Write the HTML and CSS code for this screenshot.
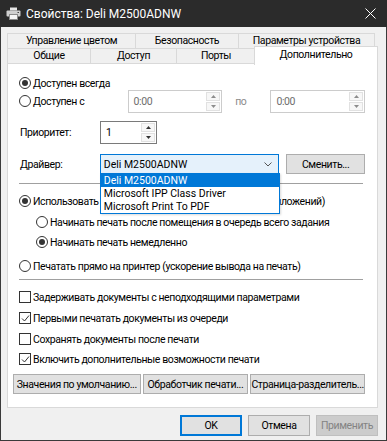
FILE: index.html
```html
<!DOCTYPE html>
<html lang="ru">
<head>
  <meta charset="UTF-8">
  <title>Свойства: Deli M2500ADNW</title>
  <link rel="stylesheet" href="styles.css">
</head>
<body>

<div class="window">
  <div class="titlebar">
    <svg class="title-icon" width="15" height="13" viewBox="0 0 15 13">
      <rect x="4" y="0.5" width="7" height="3" fill="#e6e6e6"/>
      <rect x="0.5" y="3.5" width="14" height="6" rx="1" fill="#cfcfcf"/>
      <rect x="3.5" y="7.5" width="8" height="5" fill="#f4f4f4" stroke="#8a8a8a"/>
      <rect x="11.5" y="5" width="1.5" height="1" fill="#444"/>
    </svg>
    <span class="title">Свойства: Deli M2500ADNW</span>
    <svg class="close" width="11" height="11" viewBox="0 0 11 11">
      <path d="M0.5 0.5 L10.5 10.5 M10.5 0.5 L0.5 10.5" stroke="#fff" stroke-width="1"/>
    </svg>
  </div>

  <div class="client">
    <!-- tabs, two rows -->
    <div class="tabs">
      <div class="tab-row">
        <div class="tab tab-color">Управление цветом</div>
        <div class="tab tab-security">Безопасность</div>
        <div class="tab tab-device">Параметры устройства</div>
      </div>
      <div class="tab-row">
        <div class="tab tab-general">Общие</div>
        <div class="tab tab-access">Доступ</div>
        <div class="tab tab-ports">Порты</div>
        <div class="tab tab-advanced active">Дополнительно</div>
      </div>
    </div>

    <div class="panel">
      <div class="row row-always">
        <span class="radio checked"></span>
        <span>Доступен всегда</span>
      </div>

      <div class="row row-from">
        <span class="radio"></span>
        <span class="from-label">Доступен с</span>
        <div class="spin spin-time disabled">
          <span class="spin-value">0:00</span>
          <span class="spin-btns">
            <span class="spin-btn"><svg width="5" height="3" viewBox="0 0 5 3"><path d="M0 3 L2.5 0 L5 3Z" fill="#8c8c8c"/></svg></span>
            <span class="spin-btn"><svg width="5" height="3" viewBox="0 0 5 3"><path d="M0 0 L2.5 3 L5 0Z" fill="#8c8c8c"/></svg></span>
          </span>
        </div>
        <span class="to-label">по</span>
        <div class="spin spin-time disabled">
          <span class="spin-value">0:00</span>
          <span class="spin-btns">
            <span class="spin-btn"><svg width="5" height="3" viewBox="0 0 5 3"><path d="M0 3 L2.5 0 L5 3Z" fill="#8c8c8c"/></svg></span>
            <span class="spin-btn"><svg width="5" height="3" viewBox="0 0 5 3"><path d="M0 0 L2.5 3 L5 0Z" fill="#8c8c8c"/></svg></span>
          </span>
        </div>
      </div>

      <div class="row row-priority">
        <span class="field-label">Приоритет:</span>
        <div class="spin spin-priority">
          <span class="spin-value">1</span>
          <span class="spin-btns">
            <span class="spin-btn"><svg width="5" height="3" viewBox="0 0 5 3"><path d="M0 3 L2.5 0 L5 3Z" fill="#333"/></svg></span>
            <span class="spin-btn"><svg width="5" height="3" viewBox="0 0 5 3"><path d="M0 0 L2.5 3 L5 0Z" fill="#333"/></svg></span>
          </span>
        </div>
      </div>

      <div class="row row-driver">
        <span class="field-label">Драйвер:</span>
        <div class="combo-wrap">
          <div class="combo">
            <span>Deli M2500ADNW</span>
            <svg width="8" height="5" viewBox="0 0 8 5"><path d="M0.5 0.5 L4 4 L7.5 0.5" fill="none" stroke="#555" stroke-width="1"/></svg>
          </div>
          <ul class="combo-list">
            <li class="selected">Deli M2500ADNW</li>
            <li>Microsoft IPP Class Driver</li>
            <li>Microsoft Print To PDF</li>
          </ul>
        </div>
        <button class="btn btn-change">Сменить...</button>
      </div>

      <div class="separator sep-top"></div>

      <div class="row row-spool">
        <span class="radio checked"></span>
        <span>Использовать очередь печати (ускорение работы приложений)</span>
      </div>
      <div class="row row-sub row-sub-first">
        <span class="radio"></span>
        <span>Начинать печать после помещения в очередь всего задания</span>
      </div>
      <div class="row row-sub row-sub-second">
        <span class="radio checked"></span>
        <span>Начинать печать немедленно</span>
      </div>
      <div class="row row-direct">
        <span class="radio"></span>
        <span>Печатать прямо на принтер (ускорение вывода на печать)</span>
      </div>

      <div class="separator sep-bottom"></div>

      <div class="row row-check row-check-first">
        <span class="check"></span>
        <span>Задерживать документы с неподходящими параметрами</span>
      </div>
      <div class="row row-check">
        <span class="check"><svg width="9" height="9" viewBox="0 0 9 9"><path d="M1 4.5 L3.5 7 L8 1.5" fill="none" stroke="#333" stroke-width="1"/></svg></span>
        <span>Первыми печатать документы из очереди</span>
      </div>
      <div class="row row-check">
        <span class="check"></span>
        <span>Сохранять документы после печати</span>
      </div>
      <div class="row row-check row-check-last">
        <span class="check"><svg width="9" height="9" viewBox="0 0 9 9"><path d="M1 4.5 L3.5 7 L8 1.5" fill="none" stroke="#333" stroke-width="1"/></svg></span>
        <span>Включить дополнительные возможности печати</span>
      </div>

      <div class="panel-buttons">
        <button class="btn btn-defaults">Значения по умолчанию...</button>
        <button class="btn btn-processor">Обработчик печати...</button>
        <button class="btn btn-separator">Страница-разделитель...</button>
      </div>
    </div>

    <div class="dialog-buttons">
      <button class="btn btn-dialog default">OK</button>
      <button class="btn btn-dialog">Отмена</button>
      <button class="btn btn-dialog" disabled>Применить</button>
    </div>
  </div>
</div>

</body>
</html>
```

FILE: styles.css
```css
* { margin: 0; padding: 0; box-sizing: border-box; }
body { font-family: Roboto, "Noto Sans", sans-serif; font-size: 10.5px; letter-spacing: -0.4px; color: #000; background: #f0f0f0; }

.window { width: 387px; height: 441px; background: #f0f0f0; border: 1px solid #3a3a3a; border-top: none; display: flex; flex-direction: column; }

/* title bar */
.titlebar { height: 27px; background: #2b2b2b; color: #fff; display: flex; align-items: center; padding: 0 9px 0 6px; margin: 0 -1px; letter-spacing: 0; }
.title-icon { margin-right: 5px; }
.title { font-size: 12px; flex: 1; }
.close { margin-right: 2px; }

.client { padding: 6px 8px 0 6px; flex: 1; display: flex; flex-direction: column; }

/* tabs */
.tabs { display: flex; flex-direction: column; }
.tab-row { display: flex; height: 16px; }
.tab-row + .tab-row { margin-top: -1px; }
.tab { height: 16px; border: 1px solid #d9d9d9; background: #f0f0f0; text-align: center; line-height: 14px; margin-right: -1px; white-space: nowrap; }
.tab-color { width: 129px; }
.tab-security { width: 104px; }
.tab-device { width: 137px; }
.tab-general { width: 84px; }
.tab-access { width: 87px; }
.tab-ports { width: 80px; }
.tab.active { width: 124px; height: 19px; margin-top: -2px; margin-left: -1px; background: #fff; border-bottom: none; position: relative; z-index: 1; line-height: 15px; }

.panel { background: #fff; border: 1px solid #d9d9d9; margin-top: -1px; padding: 0 12px 13px 11px; }

/* rows */
.row { display: flex; align-items: center; height: 18px; white-space: nowrap; }
.row-always { margin-top: 10px; }
.row-priority { margin-top: 10px; height: 24px; }
.row-driver { margin-top: 9px; height: 22px; }
.row-spool { margin-top: 8px; }
.row-sub { padding-left: 17px; }
.row-sub-first { margin-top: 3px; }
.row-sub-second { margin-top: 2px; }
.row-direct { margin-top: 6px; }
.row-check { margin-top: 3px; }
.row-check-first { margin-top: 8px; }
.row-check-last { margin-top: 2px; }

.separator { height: 1px; background: #a0a0a0; margin-right: 2px; }
.sep-top { margin-top: 8px; }
.sep-bottom { margin-top: 4px; }

/* radio + checkbox */
.radio { width: 12px; height: 12px; border: 1px solid #333; border-radius: 50%; margin-right: 2px; display: flex; align-items: center; justify-content: center; flex-shrink: 0; }
.radio.checked::after { content: ''; width: 6px; height: 6px; border-radius: 50%; background: #333; }
.check { width: 12px; height: 12px; border: 1px solid #333; margin-right: 2px; display: flex; align-items: center; justify-content: center; flex-shrink: 0; background: #fff; }

/* spin boxes */
.from-label { width: 95px; }
.to-label { color: #8a8a8a; margin: 0 24px 0 13px; }
.spin { display: flex; height: 23px; border: 1px solid #7a7a7a; background: #fff; }
.spin.disabled { border-color: #cccccc; color: #6d6d6d; }
.spin-time { width: 95px; }
.spin-priority { width: 57px; }
.spin-value { flex: 1; padding-left: 5px; line-height: 21px; }
.spin-btns { width: 15px; display: flex; flex-direction: column; padding: 1px 1px 1px 0; gap: 1px; }
.spin-btn { flex: 1; border: 1px solid #e1e1e1; background: #f7f7f7; display: flex; align-items: center; justify-content: center; }
.field-label { width: 81px; padding-left: 1px; }

/* combo */
.combo-wrap { position: relative; width: 180px; height: 21px; letter-spacing: 0; }
.combo { height: 21px; border: 1px solid #0078d7; background: #e5f1fb; display: flex; align-items: center; justify-content: space-between; padding: 0 6px 0 3px; }
.combo-list { position: absolute; left: 0; top: 19px; width: 180px; list-style: none; background: #fff; border: 1px solid #0078d7; z-index: 2; box-shadow: 1px 1px 2px rgba(0,0,0,0.15); }
.combo-list li { height: 13px; line-height: 13px; padding-left: 3px; }
.combo-list li.selected { background: #0078d7; color: #fff; }

/* buttons */
.btn { font-family: inherit; font-size: 10.5px; letter-spacing: inherit; color: #000; background: #e1e1e1; border: 1px solid #adadad; height: 20px; white-space: nowrap; padding: 0; }
.btn-change { width: 79px; margin-left: 7px; }
.panel-buttons { display: flex; gap: 2px; margin: 6px 0 0 -6px; }
.btn-defaults { width: 129px; }
.btn-processor { width: 107px; }
.btn-separator { width: 116px; }

.dialog-buttons { display: flex; justify-content: flex-end; gap: 6px; margin-top: 7px; }
.btn-dialog { width: 62px; height: 21px; }
.btn-dialog.default { border: 2px solid #0078d7; }
.btn-dialog:disabled { background: #cccccc; border-color: #bfbfbf; color: #838383; }
```
